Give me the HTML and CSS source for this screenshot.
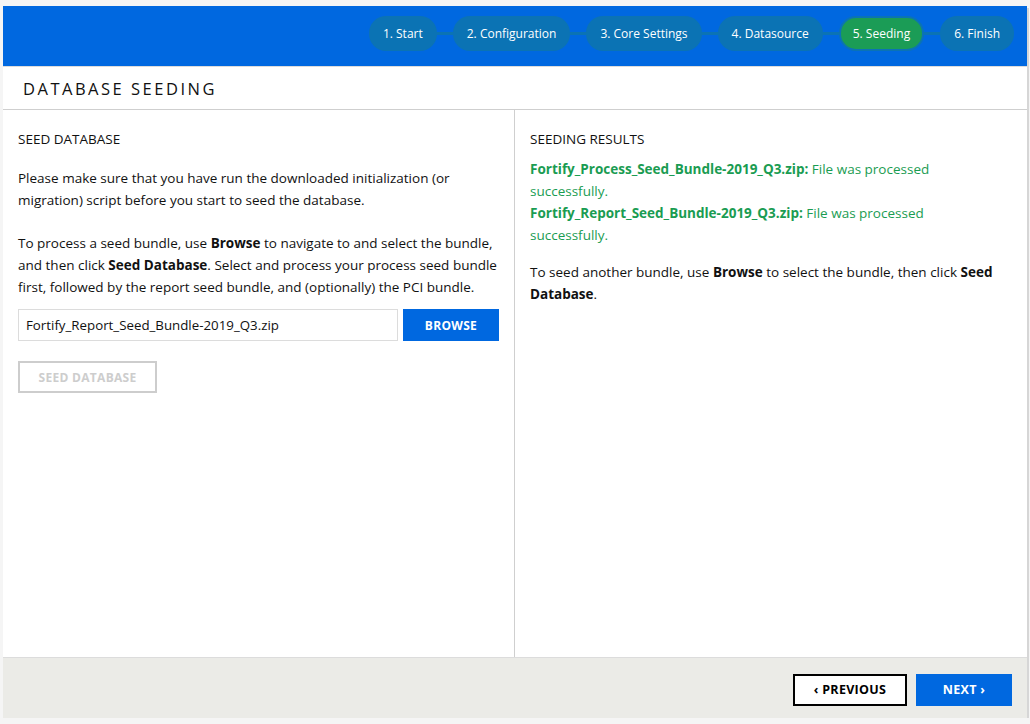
FILE: index.html
```html
<!DOCTYPE html>
<html>
<head>
<meta charset="utf-8">
<link rel="stylesheet" href="styles.css">
</head>
<body>
<div class="app">
  <header class="topbar">
    <nav class="steps">
      <span class="step">1. Start</span><span class="link"></span>
      <span class="step">2. Configuration</span><span class="link"></span>
      <span class="step">3. Core Settings</span><span class="link"></span>
      <span class="step">4. Datasource</span><span class="link"></span>
      <span class="step active">5. Seeding</span><span class="link"></span>
      <span class="step">6. Finish</span>
    </nav>
  </header>
  <div class="title-bar"><h1>DATABASE SEEDING</h1></div>
  <main class="columns">
    <section class="col left">
      <h2>SEED DATABASE</h2>
      <p>Please make sure that you have run the downloaded initialization (or migration) script before you start to seed the database.</p>
      <p class="last">To process a seed bundle, use <b>Browse</b> to navigate to and select the bundle, and then click <b>Seed Database</b>. Select and process your process seed bundle first, followed by the report seed bundle, and (optionally) the PCI bundle.</p>
      <div class="file-row">
        <div class="file-input">Fortify_Report_Seed_Bundle-2019_Q3.zip</div>
        <button class="btn primary browse">BROWSE</button>
      </div>
      <button class="btn disabled seed">SEED DATABASE</button>
    </section>
    <section class="col right">
      <h2 class="tight">SEEDING RESULTS</h2>
      <div class="results">
        <p class="ok"><b>Fortify_Process_Seed_Bundle-2019_Q3.zip:</b> File was processed successfully.</p>
        <p class="ok"><b>Fortify_Report_Seed_Bundle-2019_Q3.zip:</b> File was processed successfully.</p>
      </div>
      <p>To seed another bundle, use <b>Browse</b> to select the bundle, then click <b>Seed Database</b>.</p>
    </section>
  </main>
  <footer class="footer">
    <button class="btn outline">&#8249; PREVIOUS</button>
    <button class="btn primary next">NEXT &#8250;</button>
  </footer>
</div>
</body>
</html>
```
FILE: styles.css
```css
* { box-sizing: border-box; }
html, body { margin: 0; padding: 0; }
body {
  background: #f5f5f5;
  font-family: "Open Sans", "Liberation Sans", sans-serif;
  color: #111;
}
.app {
  margin: 6px 3px 0 3px;
  width: 1024px;
  height: 712px;
  background: #fff;
  box-shadow: 2px 2px 0 #d6d6d6;
  display: flex;
  flex-direction: column;
}
.topbar {
  height: 60px;
  background: #0068e0;
  display: flex;
  align-items: center;
  justify-content: flex-end;
  padding-right: 13px;
  border-bottom: 1px solid #dcdcdc;
  box-sizing: content-box;
}
.steps {
  display: flex;
  align-items: center;
  margin-top: -5px;
}
.step {
  height: 35px;
  line-height: 35px;
  padding: 0 14px;
  border-radius: 17px;
  background: #0b73b4;
  color: #fff;
  font-size: 12px;
  white-space: nowrap;
}
.step.active {
  background: #1b9c56;
  border: 2px solid #0b73b4;
  line-height: 31px;
  padding: 0 12px;
}
.link {
  width: 16px;
  height: 3px;
  background: #0b73b4;
}
.title-bar {
  height: 43px;
  border-bottom: 1px solid #cfcfcf;
  display: flex;
  align-items: center;
  padding-left: 20px;
}
.title-bar h1 {
  margin: 0;
  font-size: 16.5px;
  font-weight: 400;
  letter-spacing: 2.5px;
  color: #111;
}
.columns {
  flex: 1;
  display: grid;
  grid-template-columns: 512px 1fr;
}
.col {
  padding: 18px 15px;
}
.col.left { border-right: 1px solid #cfcfcf; }
.col h2 {
  margin: 0 0 17px;
  font-size: 13.5px;
  font-weight: 400;
  line-height: 22px;
}
.col h2.tight { margin-bottom: 8px; }
.col p {
  margin: 0 0 21px;
  font-size: 13.5px;
  line-height: 22px;
}
.col p.last { margin-bottom: 11px; }
.col b { font-weight: 700; }
.results { margin-bottom: 15px; max-width: 425px; }
.results p.ok { margin: 0; color: #1a9c52; }
.file-row {
  display: flex;
  gap: 5px;
}
.file-input {
  width: 380px;
  height: 32px;
  border: 1px solid #dcdcdc;
  padding: 0 7px;
  line-height: 30px;
  font-size: 13.3px;
}
.btn {
  font-family: inherit;
  font-weight: 700;
  font-size: 12px;
  height: 32px;
  border: none;
  cursor: pointer;
  letter-spacing: 0.3px;
}
.primary { background: #0068e0; color: #fff; }
.browse { width: 96px; }
.seed {
  margin-top: 20px;
  width: 139px;
  background: #fff;
  border: 2px solid #cdcdcd;
  color: #cdcdcd;
}
.footer {
  height: 61px;
  background: #ebebe7;
  border-top: 1px solid #dcdcdc;
  display: flex;
  justify-content: flex-end;
  align-items: center;
  gap: 9px;
  padding-right: 15px;
  padding-top: 3px;
}
.outline {
  width: 114px;
  background: #fff;
  border: 2px solid #000;
  color: #000;
  font-size: 12.5px;
}
.next { width: 96px; font-size: 12.5px; }
```
